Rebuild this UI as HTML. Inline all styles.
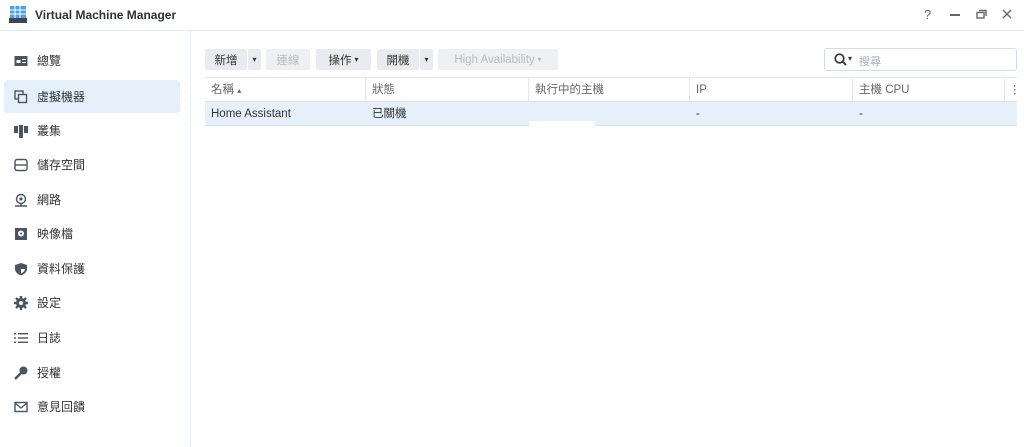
<!DOCTYPE html><html><head><meta charset="utf-8"><style>
*{box-sizing:border-box;margin:0;padding:0}
body{width:1024px;height:447px;background:#fff;font-family:"Liberation Sans","Noto Sans CJK TC",sans-serif;font-size:12px;color:#333;position:relative;overflow:hidden}
.abs{position:absolute}
.hdr{left:0;top:0;width:1024px;height:31px;border-bottom:1px solid #e6ebf2}
.side{left:0;top:31px;width:191px;height:416px;border-right:1px dotted #dde3ea}
.nav{position:absolute;left:4px;width:176px;height:33px;display:flex;align-items:center;padding-left:10px;font-size:12px;color:#333;border-radius:3px}
.nav svg{margin-right:9px}
.btn{position:absolute;top:49px;height:21px;background:#e8ebef;border-radius:2px;font-size:11.5px;display:flex;align-items:center;justify-content:center;color:#333}
.dis{color:#b5bcc4;background:#eef0f3}
.th{position:absolute;top:78px;height:24px;line-height:24px;font-size:11.5px;color:#666;padding-left:6px;border-right:1px solid #e3e7ec}
.td{position:absolute;top:102px;height:24px;line-height:24px;font-size:11.5px;padding-left:6px}
</style></head><body>
<div class="abs hdr"></div>
<svg class="abs" style="left:8px;top:5px" width="20" height="20" viewBox="0 0 20 20"><rect x="2" y="1" width="16" height="12" fill="#4aa3df"/><g stroke="#fff" stroke-width="1"><line x1="7" y1="1" x2="7" y2="13"/><line x1="12" y1="1" x2="12" y2="13"/><line x1="2" y1="5" x2="18" y2="5"/><line x1="2" y1="9" x2="18" y2="9"/></g><rect x="1" y="13" width="18" height="5" fill="#3d4650"/></svg>
<div class="abs" style="left:35px;top:8px;font-weight:bold;font-size:12px;color:#2b333b">Virtual Machine Manager</div>
<div class="abs" style="left:924px;top:7px;color:#666;font-size:13px">?</div>
<div class="abs" style="left:950px;top:14px;width:10px;height:1.5px;background:#666"></div>
<svg class="abs" style="left:976px;top:9px" width="11" height="10"><rect x="1" y="3.5" width="7" height="5.5" fill="none" stroke="#666" stroke-width="1.4"/><path d="M3 1.5H10V7" fill="none" stroke="#666" stroke-width="1.4"/></svg>
<svg class="abs" style="left:1002px;top:9px" width="10" height="10"><path d="M1 1L9 9M9 1L1 9" stroke="#666" stroke-width="1.4"/></svg>
<div class="abs side"></div>
<div class="nav" style="top:44px"><svg width="14" height="12"><rect x="0.5" y="1" width="13" height="10" fill="#4a5560"/><rect x="2.5" y="5" width="4" height="3" fill="#fff"/><rect x="8" y="4" width="4" height="1" fill="#fff"/><rect x="8" y="7" width="4" height="1" fill="#fff"/></svg>總覽</div>
<div class="nav" style="top:80px;background:#e6f0fb"><svg width="14" height="14"><rect x="1" y="1" width="8" height="8" fill="none" stroke="#4a5560" stroke-width="1.4"/><rect x="4.5" y="4.5" width="8" height="8" fill="#e6f0fb" stroke="#4a5560" stroke-width="1.4"/></svg>虛擬機器</div>
<div class="nav" style="top:114px"><svg width="14" height="14"><rect x="0" y="2" width="4" height="7" fill="#4a5560"/><rect x="5" y="1" width="4" height="13" fill="#4a5560"/><rect x="10" y="2" width="4" height="7" fill="#4a5560"/></svg>叢集</div>
<div class="nav" style="top:148px"><svg width="14" height="14"><rect x="1" y="1.5" width="12" height="11" rx="2" fill="none" stroke="#4a5560" stroke-width="1.4"/><line x1="1" y1="7" x2="13" y2="7" stroke="#4a5560" stroke-width="1.4"/></svg>儲存空間</div>
<div class="nav" style="top:183px"><svg width="14" height="14"><circle cx="7" cy="6" r="4.5" fill="none" stroke="#4a5560" stroke-width="1.4"/><circle cx="7" cy="6" r="1.6" fill="#4a5560"/><path d="M1 13H13M7 10V13" stroke="#4a5560" stroke-width="1.4"/></svg>網路</div>
<div class="nav" style="top:217px"><svg width="14" height="14"><rect x="1" y="1" width="12" height="12" fill="#4a5560"/><circle cx="7" cy="6.5" r="3" fill="#fff"/><circle cx="7" cy="6.5" r="1" fill="#4a5560"/></svg>映像檔</div>
<div class="nav" style="top:252px"><svg width="14" height="14"><path d="M7 1L13 3V7C13 10 10 12.5 7 13.5C4 12.5 1 10 1 7V3Z" fill="#4a5560"/><path d="M7 3V11.5C9 10.5 11 9 11 7H7Z" fill="#fff"/></svg>資料保護</div>
<div class="nav" style="top:286px"><svg width="14" height="14"><circle cx="7" cy="7" r="5" fill="#4a5560"/><g stroke="#4a5560" stroke-width="2.5"><line x1="7" y1="0" x2="7" y2="14"/><line x1="0" y1="7" x2="14" y2="7"/><line x1="2" y1="2" x2="12" y2="12"/><line x1="12" y1="2" x2="2" y2="12"/></g><circle cx="7" cy="7" r="2" fill="#fff"/></svg>設定</div>
<div class="nav" style="top:321px"><svg width="14" height="14"><g fill="#4a5560"><rect x="0" y="2" width="2" height="1.4"/><rect x="0" y="6.3" width="2" height="1.4"/><rect x="0" y="10.6" width="2" height="1.4"/><rect x="4" y="2" width="10" height="1.4"/><rect x="4" y="6.3" width="10" height="1.4"/><rect x="4" y="10.6" width="10" height="1.4"/></g></svg>日誌</div>
<div class="nav" style="top:356px"><svg width="14" height="14"><circle cx="9.5" cy="4.5" r="4" fill="#4a5560"/><path d="M7 7L1 13" stroke="#4a5560" stroke-width="2.5"/></svg>授權</div>
<div class="nav" style="top:390px"><svg width="14" height="14"><rect x="1" y="2.5" width="12" height="9" fill="none" stroke="#4a5560" stroke-width="1.4"/><path d="M1 3L7 8L13 3" fill="none" stroke="#4a5560" stroke-width="1.4"/></svg>意見回饋</div>

<div class="btn" style="left:205px;width:42px">新增</div>
<div class="btn" style="left:248px;width:13px;font-size:8px">▾</div>
<div class="btn dis" style="left:266px;width:44px">連線</div>
<div class="btn" style="left:316px;width:55px">操作 <span style="font-size:8px;margin-left:3px">▾</span></div>
<div class="btn" style="left:377px;width:42px">開機</div>
<div class="btn" style="left:420px;width:13px;font-size:8px">▾</div>
<div class="btn dis" style="left:438px;width:120px">High Availability <span style="font-size:8px;margin-left:3px">▾</span></div>
<div class="abs" style="left:824px;top:48px;width:193px;height:23px;border:1px solid #d5dbe2;border-radius:3px"></div>
<svg class="abs" style="left:834px;top:53px" width="14" height="14"><circle cx="5.5" cy="5.5" r="4.3" fill="none" stroke="#333" stroke-width="1.7"/><path d="M8.5 8.5L12 12" stroke="#333" stroke-width="1.8"/></svg>
<div class="abs" style="left:848px;top:54px;font-size:8px">▾</div>
<div class="abs" style="left:859px;top:53px;color:#aab1b9;font-size:11px">搜尋</div>

<div class="abs" style="left:205px;top:77px;width:812px;height:1px;background:#e3e7ec"></div>
<div class="th" style="left:205px;width:161px">名稱 <span style="font-size:8px">▴</span></div>
<div class="th" style="left:366px;width:163px">狀態</div>
<div class="th" style="left:529px;width:161px">執行中的主機</div>
<div class="th" style="left:690px;width:163px">IP</div>
<div class="th" style="left:853px;width:152px">主機 CPU</div>
<div class="th" style="left:1005px;width:12px;border:none;padding-left:4px">⋮</div>
<div class="abs" style="left:205px;top:101px;width:812px;height:25px;background:#e6f0fb;border-top:1px solid #d8e3ee;border-bottom:1px solid #d8e3ee"></div>
<div class="td" style="left:205px;color:#333">Home Assistant</div>
<div class="td" style="left:366px">已關機</div>
<div class="td" style="left:690px">-</div>
<div class="td" style="left:853px">-</div>
<div class="abs" style="left:529px;top:121px;width:66px;height:6px;background:#fff"></div>
</body></html>
